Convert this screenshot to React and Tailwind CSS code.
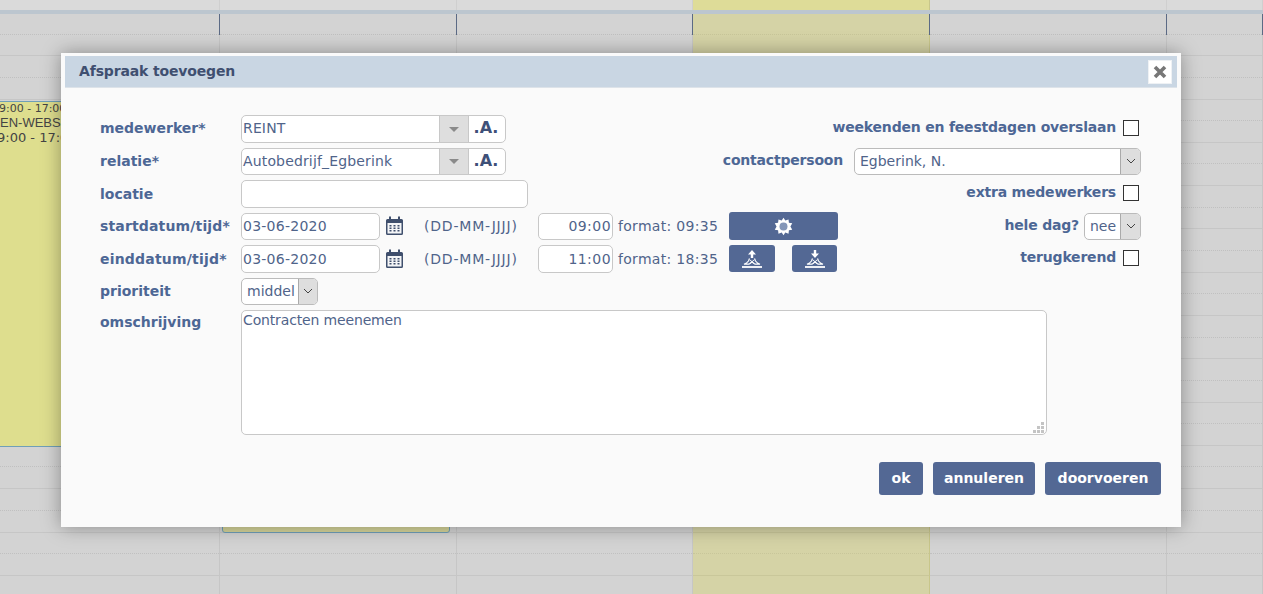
import React from 'react';

const font = { fontFamily: '"DejaVu Sans", Verdana, sans-serif' };

const columns = ['', '', '', 'yellow', '', ''];
const rows = Array.from({ length: 14 });

const GearIcon = () => (
  <svg width="19" height="19" viewBox="0 0 20 20" fill="white">
    <path d="M10 .8l1.900 3 3.400-1.300.4 3.600 3.500.5L17.300 10l1.900 3.400-3.500.5-.4 3.600-3.400-1.300-1.900 3-1.900-3-3.400 1.300-.4-3.600-3.500-.5L2.700 10 .8 6.600l3.500-.5.4-3.600 3.400 1.300z" />
    <circle cx="10" cy="10" r="4.200" fill="#8496b8" />
  </svg>
);

const SunUpIcon = ({ down }) => (
  <svg width="22" height="20" viewBox="0 0 22 20" fill="none" stroke="white">
    {down ? (
      <path d="M9.800 1h2.400v3.500H15L11 9 7 4.500h2.800z" fill="white" stroke="none" />
    ) : (
      <path d="M11 1l4 4.500h-2.800V9H9.800V5.500H7z" fill="white" stroke="none" />
    )}
    <path d="M8.500 9.500L7.500 12Q6 14 3 15.200H8L11 13l3 2.200h5Q16 14 14.500 12L13.500 9.500" strokeWidth="1.200" />
    <path d="M9 14.500l4-3.500M13 14.500l-4-3.500" strokeWidth="0.900" />
    <path d="M1 18h20" strokeWidth="1.800" />
  </svg>
);

const CalendarIcon = () => (
  <svg width="17" height="20" viewBox="0 0 17 20" className="shrink-0">
    <path d="M1.500 3h14a1.500 1.500 0 0 1 1.500 1.500v13a1.500 1.500 0 0 1-1.500 1.500h-14A1.500 1.500 0 0 1 0 17.500v-13A1.500 1.500 0 0 1 1.500 3z" fill="#3f4f6d" />
    <rect x="1.500" y="7" width="14" height="10.500" fill="#f4f5f7" />
    <rect x="3" y="0.500" width="2" height="4" fill="#3f4f6d" />
    <rect x="12" y="0.500" width="2" height="4" fill="#3f4f6d" />
    <path d="M3.500 9h2v1.600h-2zM7.500 9h2v1.600h-2zM11.500 9h2v1.600h-2zM3.500 11.500h2v1.600h-2zM7.500 11.500h2v1.600h-2zM11.500 11.500h2v1.600h-2zM3.500 14h2v1.600h-2zM7.500 14h2v1.600h-2zM11.500 14h2v1.600h-2z" fill="#3f4f6d" />
  </svg>
);

const Label = ({ children, className }) => (
  <label className={`w-[141px] shrink-0 text-[14px] font-bold text-[#4d6795] ${className || ''}`}>{children}</label>
);

const RightLabel = ({ children }) => (
  <label className="-translate-y-[1px] text-[14px] font-bold tracking-[-0.2px] text-[#4d6795]">{children}</label>
);

const Check = () => (
  <input type="checkbox" className="ml-[7px] mr-[2px] h-[16px] w-[16px] -translate-y-[1px] appearance-none border border-[#333] bg-white" />
);

// combobox with the grey arrow block and the .A. button beside it
const Combo = ({ value }) => (
  <div className="flex h-full w-[265px] rounded-[5px] border border-[#c8c8c8] bg-white">
    <div className="flex-1 pl-[1px] text-[14px] leading-[25px] tracking-[0.15px] text-[#50648a]">{value}</div>
    <div className="flex w-[30px] items-center justify-center border-x border-[#c8c8c8] bg-[#dedede]">
      <div className="mt-[1px] h-0 w-0 border-x-[5px] border-t-[5px] border-x-transparent border-t-[#8a8a8a]"></div>
    </div>
    <div className="w-[36px] pr-[2px] text-center text-[16px] font-bold leading-[24px] text-[#3e5078]">.A.</div>
  </div>
);

const Chevron = ({ width }) => (
  <div className={`flex ${width} shrink-0 items-center justify-center rounded-r-[4px] border-l border-[#aaa] bg-[#dedede]`}>
    <svg width="10" height="6" viewBox="0 0 10 6" fill="none" stroke="#444">
      <path d="M1 1l4 4 4-4" />
    </svg>
  </div>
);

const Input = ({ value, className }) => (
  <input
    readOnly
    value={value}
    className={`h-full rounded-[5px] border border-[#c8c8c8] bg-white px-[1px] text-[14px] text-[#50648a] outline-none ${className}`}
  />
);

const Button = ({ children, className }) => (
  <button className={`flex items-center justify-center rounded-[3px] bg-[#536894] text-[14px] font-bold text-white ${className}`}>
    {children}
  </button>
);

const DateTime = ({ date, time, format, children }) => (
  <div className="flex h-full items-center">
    <Input value={date} className="w-[139px] tracking-[0.25px]" />
    <div className="ml-[6px] w-[38px]">
      <CalendarIcon />
    </div>
    <span className="w-[114px] pt-[1px] text-[14px] tracking-[0.8px] text-[#50648a]">(DD-MM-JJJJ)</span>
    <Input value={time} className="w-[75px] text-right tracking-[0.45px]" />
    <span className="ml-[5px] w-[111px] pt-[1px] text-[14px] tracking-[0.3px] text-[#50648a]">format: {format}</span>
    {children}
  </div>
);

const Calendar = () => (
  <div className="absolute inset-0 overflow-hidden bg-[#d3d3d3]">
    <div className="grid h-[10px] grid-cols-[220px_237px_236px_237px_237px_96px] bg-[#dadada]">
      {columns.map((c, i) => (
        <div key={i} className={`border-r ${c ? 'border-[#c8c68a] bg-[#dedc98]' : 'border-[#cfcfcf]'}`}></div>
      ))}
    </div>
    <div className="h-[4px] bg-[#bcc6cf]"></div>
    {rows.map((_, r) => (
      <div key={r} className={`grid grid-cols-[220px_237px_236px_237px_237px_96px] ${r === 0 ? 'h-[42.300px]' : 'h-[43.300px]'}`}>
        {columns.map((c, i) => (
          <div
            key={i}
            className={`relative border-r border-b ${c ? 'border-r-[#c8c68a] border-b-[#c9c79a] bg-[#d5d3a6]' : 'border-[#c6c6c6]'}`}
          >
            <div className={`border-b border-dotted ${r === 0 ? 'h-[21px]' : 'h-[21.500px]'} ${c ? 'border-[#c8c69a]' : 'border-[#c0c0c0]'}`}></div>
            {r === 0 && <div className="absolute -right-px top-0 h-[21px] w-px bg-[#5b6a85]"></div>}
          </div>
        ))}
      </div>
    ))}
    {/* agenda items */}
    <div className="absolute left-0 top-[101px] h-[346px] w-[66px] overflow-hidden border-y border-y-[#6f9fb8] bg-[#dede8e] text-[#444]">
      <div className="-ml-[1px] whitespace-nowrap text-[11px] leading-[14px]">9:00 - 17:00</div>
      <div className="whitespace-nowrap text-[13px] leading-[14px]" style={{ fontFamily: '"Liberation Sans", sans-serif' }}>EN-WEBSITE</div>
      <div className="-ml-[3px] whitespace-nowrap text-[13px] leading-[15px]">9:00 - 17:00</div>
    </div>
    <div className="absolute left-[222px] top-[480px] h-[53px] w-[228px] rounded-b-[3px] border border-[#6f9fb8] bg-[#d5d49a]"></div>
  </div>
);

const App = () => {
  return (
    <div className="relative h-[594px] w-[1263px] overflow-hidden" style={font}>
      <Calendar />
      <div className="absolute left-[61px] top-[53px] h-[474px] w-[1120px] bg-[#fafafa] pt-[3px] shadow-[0_0_18px_rgba(0,0,0,0.35)]">
        <div className="mx-[4px] flex h-[32px] items-center justify-between border-b border-[#dde3e9] bg-[#c9d6e3] pl-[14px] pr-[5px]">
          <span className="text-[14px] font-bold tracking-[-0.15px] text-[#3f4f70]">Afspraak toevoegen</span>
          <button className="flex h-[24px] w-[24px] items-center justify-center border border-[#eef1f4] bg-white">
            <svg width="14" height="14" viewBox="0 0 14 14" stroke="#777" strokeWidth="3.600">
              <path d="M2 2l10 10M12 2L2 12" />
            </svg>
          </button>
        </div>

        <div className="flex flex-col gap-[5px] pl-[39px] pr-[40px] pt-[27px]">
          <div className="flex h-[27.500px] items-center justify-between">
            <div className="flex h-full items-center">
              <Label>medewerker*</Label>
              <Combo value="REINT" />
            </div>
            <div className="flex items-center">
              <RightLabel>weekenden en feestdagen overslaan</RightLabel>
              <Check />
            </div>
          </div>

          <div className="flex h-[27.500px] items-center justify-between">
            <div className="flex h-full items-center">
              <Label>relatie*</Label>
              <Combo value="Autobedrijf_Egberink" />
            </div>
            <div className="flex h-full items-center">
              <RightLabel>contactpersoon</RightLabel>
              <div className="ml-[11px] flex h-full w-[287px] rounded-[5px] border border-[#bbb] bg-white">
                <div className="flex-1 pl-[5px] text-[14px] leading-[25px] text-[#50648a]">Egberink, N.</div>
                <Chevron width="w-[20px]" />
              </div>
            </div>
          </div>

          <div className="flex h-[27.500px] items-center justify-between">
            <div className="flex h-full items-center">
              <Label className="translate-y-[1px]">locatie</Label>
              <Input value="" className="w-[287px]" />
            </div>
            <div className="flex items-center">
              <RightLabel>extra medewerkers</RightLabel>
              <Check />
            </div>
          </div>

          <div className="flex h-[27.500px] items-center justify-between">
            <div className="flex h-full items-center">
              <Label className="tracking-[0.15px]">startdatum/tijd*</Label>
              <DateTime date="03-06-2020" time="09:00" format="09:35">
                <Button className="h-[28px] w-[109px]"><GearIcon /></Button>
              </DateTime>
            </div>
            <div className="flex h-full items-center">
              <RightLabel>hele dag?</RightLabel>
              <div className="ml-[5px] flex h-full w-[57px] rounded-[5px] border border-[#bbb] bg-white">
                <div className="flex-1 pl-[5px] text-[14px] leading-[25px] text-[#50648a]">nee</div>
                <Chevron width="w-[20px]" />
              </div>
            </div>
          </div>

          <div className="flex h-[27.500px] items-center justify-between">
            <div className="flex h-full items-center">
              <Label className="translate-y-[1px] tracking-[0.2px]">einddatum/tijd*</Label>
              <DateTime date="03-06-2020" time="11:00" format="18:35">
                <Button className="h-[27px] w-[46px]"><SunUpIcon /></Button>
                <Button className="ml-[17px] h-[27px] w-[45px]"><SunUpIcon down /></Button>
              </DateTime>
            </div>
            <div className="flex items-center">
              <RightLabel>terugkerend</RightLabel>
              <Check />
            </div>
          </div>

          <div className="flex h-[27.500px] items-center">
            <Label>prioriteit</Label>
            <div className="flex h-full w-[77px] rounded-[5px] border border-[#bbb] bg-white">
              <div className="flex-1 pl-[5px] text-[14px] leading-[25px] text-[#50648a]">middel</div>
              <Chevron width="w-[19px]" />
            </div>
          </div>

          <div className="flex items-start">
            <Label className="pt-[2px]">omschrijving</Label>
            <div className="relative">
              <textarea
                readOnly
                value="Contracten meenemen"
                className="block h-[125px] w-[806px] resize-none rounded-[5px] border border-[#c8c8c8] bg-white px-[1px] pt-[1px] text-[14px] leading-[17px] tracking-[-0.15px] text-[#50648a] outline-none"
              />
              {/* resize grip */}
              <svg width="11" height="11" viewBox="0 0 11 11" fill="#c4c4c4" className="absolute bottom-[2px] right-[3px]">
                <path d="M8 0h3v3H8zM4 4h3v3H4zM8 4h3v3H8zM0 8h3v3H0zM4 8h3v3H4zM8 8h3v3H8z" />
              </svg>
            </div>
          </div>
        </div>

        <div className="mt-[27px] flex justify-end gap-[10px] pr-[20px]">
          <Button className="h-[33px] w-[44px]">ok</Button>
          <Button className="h-[33px] w-[102px]">annuleren</Button>
          <Button className="h-[33px] w-[116px]">doorvoeren</Button>
        </div>
      </div>
    </div>
  );
};

export default App;
